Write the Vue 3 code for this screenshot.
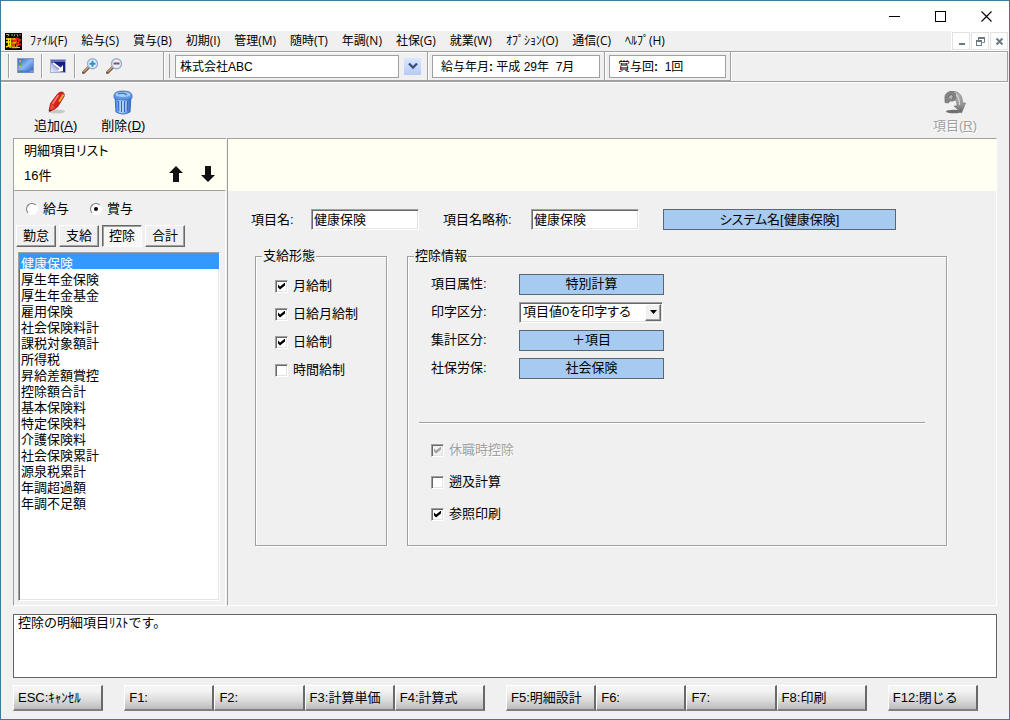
<script setup>
import { ref } from 'vue'

const menus = [
  'ﾌｧｲﾙ(F)', '給与(S)', '賞与(B)', '初期(I)', '管理(M)', '随時(T)',
  '年調(N)', '社保(G)', '就業(W)', 'ｵﾌﾟｼｮﾝ(O)', '通信(C)', 'ﾍﾙﾌﾟ(H)',
]
const tabs = ['勤怠', '支給', '控除', '合計']
const activeTab = ref('控除')
const payType = ref('賞与')
const items = [
  '健康保険', '厚生年金保険', '厚生年金基金', '雇用保険', '社会保険料計',
  '課税対象額計', '所得税', '昇給差額賞控', '控除額合計', '基本保険料',
  '特定保険料', '介護保険料', '社会保険累計', '源泉税累計', '年調超過額', '年調不足額',
]
const selected = ref('健康保険')
const company = ref('株式会社ABC')
const period = ' 平成 29年  7月'
const bonusRound = '  1回'
const itemName = ref('健康保険')
const shortName = ref('健康保険')
const payForms = ref([
  { label: '月給制', on: true },
  { label: '日給月給制', on: true },
  { label: '日給制', on: true },
  { label: '時間給制', on: false },
])
const options = ref([
  { label: '休職時控除', on: true, disabled: true },
  { label: '遡及計算', on: false, disabled: false },
  { label: '参照印刷', on: true, disabled: false },
])
const keyGroups = [
  ['ESC:ｷｬﾝｾﾙ'],
  ['F1:', 'F2:', 'F3:計算単価', 'F4:計算式'],
  ['F5:明細設計', 'F6:', 'F7:', 'F8:印刷'],
  ['F12:閉じる'],
]
</script>

<template>
  <div class="window">
    <header class="titlebar">
      <button aria-label="最小化"><svg width="11" height="11"><path d="M0 5.5H11" stroke="#000" /></svg></button>
      <button aria-label="最大化"><svg width="11" height="11"><rect x=".5" y=".5" width="10" height="10" fill="none" stroke="#000" /></svg></button>
      <button aria-label="閉じる"><svg width="11" height="11"><path d="M.5 .5L10.5 10.5M10.5 .5L.5 10.5" stroke="#000" stroke-width="1.1" /></svg></button>
    </header>

    <nav class="menubar">
      <svg class="logo" width="17" height="17" viewBox="0 0 17 17">
        <rect width="17" height="17" fill="#080400" />
        <path d="M1 1.500H4L3 3.500M6 2H8M10 1L9 3.500M12 1L13 3.500M15 1V2.500" stroke="#ccc" stroke-width=".8" fill="none" />
        <path d="M1 6H6M1 9H6M3.500 5V14M1 14L6 12M6 5L5 15" stroke="#ffe600" stroke-width="1.400" fill="none" />
        <path d="M7 6H11V10H7V14.500H12M9 5V15" stroke="#ffa800" stroke-width="1.300" fill="none" />
        <path d="M7 8L12 7M11 5L15.500 7L12 10M13.500 5V13M11 12L16 11M6.500 11L9 12" stroke="#f02410" stroke-width="1.500" fill="none" />
        <path d="M10 14.500H15M12 12V15" stroke="#ffd000" />
      </svg>
      <button v-for="m in menus" :key="m" class="menu">{{ m }}</button>
      <div class="mdi">
        <button aria-label="子ウィンドウを最小化"><svg width="9" height="9"><path d="M2 7H8" stroke="#6c7a86" stroke-width="2" /></svg></button>
        <button aria-label="元のサイズに戻す"><svg width="9" height="9"><path d="M2.5 3V1H8.5V5.5H6.5" stroke="#6c7a86" fill="none" /><path d="M2 1H9" stroke="#6c7a86" stroke-width="2" /><rect x=".5" y="4" width="5" height="4.5" fill="none" stroke="#6c7a86" /><path d="M0 4H6" stroke="#6c7a86" stroke-width="2" /></svg></button>
        <button aria-label="子ウィンドウを閉じる"><svg width="9" height="9"><path d="M1.5 1.5L7.5 7.5M7.5 1.5L1.5 7.5" stroke="#6c7a86" stroke-width="2" /></svg></button>
      </div>
    </nav>

    <div class="toolbar">
      <div class="band tools">
        <div class="cell">
          <button aria-label="デスクトップ">
            <svg width="17" height="16" viewBox="0 0 17 16">
              <defs><linearGradient id="desk" x1="0" y1="0" x2="1" y2="1"><stop offset="0" stop-color="#2c5cb8" /><stop offset=".5" stop-color="#8ab8f4" /><stop offset="1" stop-color="#2450c0" /></linearGradient></defs>
              <rect x=".5" y=".5" width="16" height="14" fill="url(#desk)" stroke="#8b9cc0" />
              <path d="M2 3H4" stroke="#d8a060" stroke-width="2" /><path d="M2 6H4" stroke="#57a04c" stroke-width="2" /><path d="M2 9H4" stroke="#c8b050" stroke-width="2" />
              <path d="M1 13.5H16" stroke="#3f7fd8" stroke-width="2" /><path d="M1 13.5H5" stroke="#509a54" stroke-width="2" />
              <path d="M13 13.5H16" stroke="#8f9aa8" stroke-width="2" />
            </svg>
          </button>
        </div>
        <div class="cell">
          <button aria-label="画面縮小">
            <svg width="16" height="14" viewBox="0 0 16 14">
              <defs><linearGradient id="shrink" x1="0" y1="1" x2="1" y2="0"><stop offset="0" stop-color="#f4f6ff" /><stop offset=".35" stop-color="#b4bce8" /><stop offset=".5" stop-color="#1a2288" /><stop offset="1" stop-color="#101878" /></linearGradient></defs>
              <rect x=".5" y=".5" width="15" height="13" fill="url(#shrink)" stroke="#a9b0cc" />
              <path d="M1 1H15V3H1Z" fill="#5e6cc0" />
              <path d="M3 4L11 10" stroke="#fff" stroke-width="1.8" /><path d="M13 12V6L7.500 12Z" fill="#fff" />
            </svg>
          </button>
        </div>
        <div class="cell wide">
          <button v-for="kind in ['拡大', '縮小']" :key="kind" :aria-label="kind">
            <svg width="17" height="16" viewBox="0 0 17 16">
              <path d="M7 9L1.500 14.500" stroke="#7a5238" stroke-width="3" stroke-linecap="round" />
              <path d="M6.500 9L1.800 13.700" stroke="#d8a078" stroke-width="1.2" stroke-linecap="round" />
              <circle cx="10.500" cy="5.800" r="5" fill="#e4f2ff" stroke="#9ab0d0" stroke-width="1.4" />
              <path v-if="kind === '拡大'" d="M7.500 5.800H13.500M10.500 2.800V8.800" stroke="#2f8fc4" stroke-width="2" />
              <path v-else d="M7.500 5.500H13.500" stroke="#a04440" stroke-width="2" />
            </svg>
          </button>
        </div>
      </div>
      <div class="band company">
        <input v-model="company" class="field name" aria-label="会社名">
        <button class="drop" aria-label="会社選択"><svg width="10" height="8"><path d="M1 1.500L5 5.500L9 1.500" fill="none" stroke="#3c5078" stroke-width="2.400" /></svg></button>
      </div>
      <div class="band"><div class="field month">給与年月<b>:</b>{{ period }}</div></div>
      <div class="band"><div class="field count">賞与回<b>:</b>{{ bonusRound }}</div></div>
    </div>

    <div class="actions">
      <button class="action">
        <svg width="20" height="25" viewBox="0 0 20 25">
          <ellipse cx="11" cy="21.500" rx="8" ry="2" fill="#b8b8b8" opacity=".7" />
          <path d="M3 21L4.500 13.500L11.500 4Q13.500 1.500 16.500 2Q19 3.500 18 6.500L11.500 17L8 19.500Z" fill="#d6221c" stroke="#a81410" stroke-width=".8" />
          <path d="M12.500 5L6.500 14" stroke="#ff8070" stroke-width="1.600" />
          <path d="M17.500 4.500L13 11.500" stroke="#ecae3c" stroke-width="2" />
          <path d="M5 14Q8 14.500 8.500 18L4 20.800Z" fill="#ee4a3c" /><path d="M2.500 22.500L4.500 19.500L6.300 20.300Z" fill="#6e1410" />
        </svg>
        <span>追加(<u>A</u>)</span>
      </button>
      <button class="action">
        <svg width="20" height="25" viewBox="0 0 20 25">
          <defs><linearGradient id="bin"><stop offset="0" stop-color="#3f80d8" /><stop offset=".4" stop-color="#b4d8ff" /><stop offset="1" stop-color="#2b62c4" /></linearGradient></defs>
          <path d="M2 6L3 22Q10 26 17 22L18 6Z" fill="url(#bin)" stroke="#3a6cc0" />
          <path d="M5.500 11L6 21M8.500 11V22M11.500 11V22M14.500 11L14 21" stroke="#2f66bf" stroke-width="1.200" />
          <path d="M7 11V21.500M10 11V22M13 11V21.500" stroke="#dbeeff" stroke-width=".8" />
          <path d="M1 5Q2 1 10 1Q18 1 19 5V8Q15 10 10 10Q5 10 1 8Z" fill="#5f98e6" stroke="#3a6cc0" stroke-width=".8" />
          <ellipse cx="10" cy="4.500" rx="7.500" ry="2.600" fill="#a6ccf8" />
          <path d="M5 4Q10 2 14 5" fill="none" stroke="#3a70c6" stroke-width="1.200" />
        </svg>
        <span>削除(<u>D</u>)</span>
      </button>
      <button class="action end" disabled>
        <svg width="22" height="25" viewBox="0 0 22 25">
          <defs><linearGradient id="turn" x1="0" y1="0" x2="0" y2="1"><stop offset="0" stop-color="#b8b8b8" /><stop offset=".6" stop-color="#989898" /><stop offset="1" stop-color="#606060" /></linearGradient></defs>
          <ellipse cx="10" cy="21.500" rx="8" ry="1.800" fill="#707070" />
          <path d="M6 1.500H11Q18.500 3 18.500 13H21.500L17.500 23L10 16H13Q13.500 11 10.500 9Z" fill="url(#turn)" stroke="#787878" stroke-width=".7" />
          <path d="M1 12.500V6Q3 1 8 1.500Q13 3 11.500 8.500Q11 11 8.500 11Q5 10 4.500 13Z" fill="#858585" stroke="#6c6c6c" stroke-width=".7" />
          <path d="M4 8Q5 4 8 4.500Q10 6 8.500 9" fill="#b4b4b4" stroke="#5c5c5c" stroke-width=".8" />
          <path d="M12 4.500Q15.500 8 15.500 15" fill="none" stroke="#d4d4d4" stroke-width="1.200" />
        </svg>
        <span>項目(<u>R</u>)</span>
      </button>
    </div>

    <main class="workspace">
      <aside class="side">
        <div class="side-head">
          <h1 class="prop">明細項目リスト</h1>
          <div class="count-row">
            <span>16件</span>
            <button aria-label="上へ移動"><svg width="14" height="16"><path d="M7 0L14 7H10V16H4V7H0Z" fill="#111" /></svg></button>
            <button aria-label="下へ移動"><svg width="14" height="16"><path d="M7 16L14 9H10V0H4V9H0Z" fill="#111" /></svg></button>
          </div>
        </div>
        <div class="side-body">
          <div class="radios">
            <label v-for="r in ['給与', '賞与']" :key="r"><input v-model="payType" type="radio" name="pay" :value="r">{{ r }}</label>
          </div>
          <div class="tabs">
            <button v-for="t in tabs" :key="t" :class="{ on: activeTab === t }" @click="activeTab = t">{{ t }}</button>
          </div>
          <select v-model="selected" class="list" size="16" aria-label="明細項目リスト">
            <option v-for="i in items" :key="i" :value="i">{{ i }}</option>
          </select>
        </div>
      </aside>

      <section class="detail">
        <div class="banner"></div>
        <div class="form">
          <div class="names">
            <label for="itemName">項目名:</label>
            <input id="itemName" v-model="itemName" class="sunken">
            <label for="shortName" class="second">項目名略称:</label>
            <input id="shortName" v-model="shortName" class="sunken">
            <button class="blue prop">システム名[健康保険]</button>
          </div>
          <div class="groups">
            <fieldset class="forms">
              <legend>支給形態</legend>
              <label v-for="p in payForms" :key="p.label" class="check"><input v-model="p.on" type="checkbox">{{ p.label }}</label>
            </fieldset>
            <fieldset class="info">
              <legend>控除情報</legend>
              <div class="row"><span id="attr">項目属性:</span><button class="blue" aria-describedby="attr">特別計算</button></div>
              <div class="row">
                <label for="print">印字区分:</label>
                <div class="combo">
                  <select id="print" class="sunken prop"><option>項目値0を印字する</option></select>
                  <span class="knob"><svg width="7" height="4"><path d="M0 0H7L3.500 4Z" /></svg></span>
                </div>
              </div>
              <div class="row"><span id="total">集計区分:</span><button class="blue" aria-describedby="total">＋項目</button></div>
              <div class="row"><span id="social">社保労保:</span><button class="blue" aria-describedby="social">社会保険</button></div>
              <hr>
              <label v-for="o in options" :key="o.label" class="check tall" :class="{ off: o.disabled }"><input v-model="o.on" type="checkbox" :disabled="o.disabled">{{ o.label }}</label>
            </fieldset>
          </div>
        </div>
      </section>
    </main>

    <p class="message" role="status">控除の明細項目ﾘｽﾄです。</p>

    <footer class="keys">
      <div v-for="(g, n) in keyGroups" :key="n" class="group" :class="{ four: g.length === 4 }">
        <button v-for="k in g" :key="k">{{ k }}</button>
      </div>
    </footer>
  </div>
</template>

<style>
body {
  background: #f0f0f0;
}
</style>

<style scoped>
* {
  box-sizing: border-box;
}
.window {
  display: flex;
  flex-direction: column;
  min-height: 100vh;
  border: 1px solid #3d7a9b;
  background: #f0f0f0;
  color: #000;
  font: 13px/16px "Liberation Sans", "Noto Sans CJK JP", sans-serif;
}
button, input, select {
  margin: 0;
  padding: 0;
  border: 0;
  border-radius: 0;
  background: none;
  color: inherit;
  font: inherit;
}
svg {
  display: block;
}
.prop {
  font-feature-settings: "palt";
}
.titlebar {
  display: flex;
  justify-content: flex-end;
  height: 30px;
  background: #fff;
}
.titlebar button {
  display: grid;
  place-items: center;
  width: 46px;
}
.menubar {
  display: flex;
  align-items: center;
  height: 20px;
  padding-left: 4px;
  font: 12px/18px "Open Sans", "Noto Sans CJK JP", sans-serif;
}
.logo {
  margin-right: 8px;
}
.menu {
  margin-right: 14px;
  padding-bottom: 1px;
  white-space: nowrap;
}
.mdi {
  display: flex;
  gap: 1px;
  margin-left: auto;
  padding: 1px;
  background: #fff;
}
.mdi button {
  display: grid;
  place-items: center;
  width: 18px;
  height: 18px;
  border: 1px solid #e2e2e2;
}
.toolbar {
  display: flex;
  height: 31px;
  margin-right: 1px;
  border: 1px solid #a0a0a0;
  border-left: 0;
  box-shadow: inset 0 1px #fff, 0 1px #fff;
  font-size: 12px;
}
.band {
  display: flex;
  align-items: center;
  padding: 0 4px;
  border-right: 1px solid #a0a0a0;
  border-bottom: 1px solid #a0a0a0;
  box-shadow: 1px 0 #fff;
}
.tools {
  width: 163px;
  padding: 0 0 0 7px;
}
.cell {
  display: flex;
  align-items: center;
  justify-content: center;
  gap: 7px;
  width: 33px;
  height: 24px;
  border-left: 1px solid #a0a0a0;
  box-shadow: inset 1px 0 #fff;
}
.wide {
  width: 56px;
}
.company {
  padding: 0 6px 0 11px;
  background: linear-gradient(#a0a0a0, #a0a0a0) 5px 2px / 1px 24px no-repeat;
}
.field {
  height: 23px;
  padding: 0 8px;
  border: 1px solid #a0a0a0;
  background: #fff;
  line-height: 22px;
  white-space: pre;
}
.name {
  width: 224px;
  padding: 0 4px 1px;
}
.month {
  width: 168px;
}
.count {
  width: 117px;
}
.drop {
  display: grid;
  place-items: center;
  width: 17px;
  height: 17px;
  margin-left: 5px;
  background: linear-gradient(#dce7ff, #b4cbf8);
}
.actions {
  display: flex;
  gap: 24px;
  height: 56px;
  padding: 8px 32px 0 33px;
}
.action {
  display: flex;
  flex-direction: column;
  align-items: center;
  gap: 3px;
  height: 44px;
}
.end {
  margin-left: auto;
  color: #a0a0a0;
  text-shadow: 1px 1px #fff;
}
.workspace {
  display: flex;
  flex: 1;
  gap: 1px;
  padding: 0 12px;
}
.side {
  display: flex;
  flex-direction: column;
  width: 213px;
}
.side-head {
  height: 52px;
  padding: 4px 11px 0 10px;
  border-top: 1px solid #a0a0a0;
  border-left: 1px solid #a0a0a0;
  background: #fffff2;
}
h1 {
  margin: 0;
  font: inherit;
}
.count-row {
  display: flex;
  align-items: center;
  gap: 18px;
  margin-top: 4px;
}
.count-row span {
  flex: 1;
  padding-top: 5px;
}
.side-body {
  display: flex;
  flex: 1;
  flex-direction: column;
  padding: 10px 5px 4px 2px;
  border: 1px solid #fff;
  border-top-color: #a0a0a0;
  border-left-color: #a0a0a0;
}
.radios {
  display: flex;
  gap: 21px;
  padding-left: 10px;
}
.radios label {
  display: flex;
  align-items: center;
  gap: 5px;
}
.radios input {
  appearance: none;
  display: grid;
  place-items: center;
  width: 12px;
  height: 12px;
  border: 1px solid #fff;
  border-top-color: #777;
  border-left-color: #777;
  border-radius: 6px;
  background: #fff;
}
.radios input:checked::after {
  content: "";
  width: 4px;
  height: 4px;
  border-radius: 2px;
  background: #000;
}
.tabs {
  display: flex;
  gap: 3px;
  margin-top: 8px;
}
.tabs button {
  width: 40px;
  height: 22px;
  border: 1px solid #fff;
  border-right-color: #696969;
  border-bottom-color: #696969;
  box-shadow: inset -1px -1px #a0a0a0;
}
.tabs .on {
  border-color: #696969 #fff #fff #696969;
  background: #f8f8f8;
  box-shadow: inset 1px 1px #a0a0a0;
}
.list {
  flex: 1;
  margin: 5px 0 0 2px;
  overflow: hidden;
  border: 1px solid #fff;
  border-top-color: #a0a0a0;
  border-left-color: #a0a0a0;
  outline: 0;
  background: #fff;
  box-shadow: inset 1px 1px #696969, inset -1px -1px #e3e3e3;
}
.list option {
  min-height: 16px;
  height: 16px;
  padding: 0 2px;
  line-height: 14px;
}
.list option:checked {
  background: #3399ff linear-gradient(#3399ff, #3399ff);
  color: #fff;
}
.detail {
  display: flex;
  flex: 1;
  flex-direction: column;
  border: 1px solid #fff;
  border-top-color: #a0a0a0;
  border-left-color: #a0a0a0;
}
.banner {
  height: 52px;
  background: #fffff2;
}
.form {
  display: flex;
  flex: 1;
  flex-direction: column;
  padding: 18px 49px 59px 23px;
}
.names {
  display: flex;
  align-items: center;
  margin-right: 51px;
}
.names label {
  width: 60px;
}
.names .second {
  width: 88px;
  margin-left: 24px;
}
.names .blue {
  flex: 1;
  margin-left: 24px;
}
.sunken {
  width: 108px;
  height: 21px;
  padding: 0 2px 3px;
  border: 1px solid #fff;
  border-top-color: #a0a0a0;
  border-left-color: #a0a0a0;
  background: #fff;
  box-shadow: inset 1px 1px #696969, inset -1px -1px #e3e3e3;
}
.blue {
  width: 145px;
  height: 21px;
  border: 1px solid #5c666e;
  background: #a6caf0;
}
.groups {
  display: flex;
  flex: 1;
  gap: 20px;
  margin: 19px 0 0 4px;
}
fieldset {
  display: flex;
  flex-direction: column;
  min-width: 0;
  margin: 0;
  border: 1px solid #a0a0a0;
  box-shadow: 1px 1px #fff, inset 1px 1px #fff;
}
legend {
  margin-left: 6px;
  padding: 0 1px;
  background: #f0f0f0;
  line-height: 14px;
}
.forms {
  width: 132px;
  padding: 9px 0 0 0;
}
.forms .check {
  padding-left: 19px;
}
.info {
  flex: 1;
  padding: 7px 0 0 0;
}
.check {
  display: flex;
  align-items: center;
  gap: 5px;
  height: 28px;
}
.check input {
  appearance: none;
  width: 13px;
  height: 13px;
  border: 1px solid #fff;
  border-top-color: #a0a0a0;
  border-left-color: #a0a0a0;
  background: #fff;
  box-shadow: inset 1px 1px #696969, inset -1px -1px #e3e3e3;
}
.check input:checked::after {
  content: "";
  display: block;
  width: 7px;
  height: 7px;
  margin: 2px;
  background: #000;
  clip-path: polygon(0 29%, 29% 57%, 100% 0, 100% 43%, 29% 100%, 0 71%);
}
.tall {
  height: 32px;
  padding-left: 23px;
}
.off {
  color: #a0a0a0;
  text-shadow: 1px 1px #fff;
}
.check.off input {
  background: #f0f0f0;
}
.check.off input:checked::after {
  background: #a0a0a0;
}
.row {
  display: grid;
  grid-template-columns: 88px auto;
  align-items: center;
  justify-content: start;
  height: 28px;
  padding-left: 23px;
}
.combo {
  display: grid;
  align-items: center;
}
.combo > * {
  grid-area: 1 / 1;
}
.combo select {
  appearance: none;
  width: 144px;
  padding: 0 3px 2px;
  line-height: 17px;
}
.knob {
  display: grid;
  place-items: center;
  justify-self: end;
  width: 16px;
  height: 17px;
  margin-right: 2px;
  border: 1px solid #fff;
  border-right-color: #696969;
  border-bottom-color: #696969;
  background: #f0f0f0;
  box-shadow: inset -1px -1px #a0a0a0;
  pointer-events: none;
}
hr {
  height: 2px;
  margin: 40px 21px 10px 11px;
  border: 0;
  border-top: 1px solid #a0a0a0;
  background: #fff;
}
.message {
  height: 64px;
  margin: 8px 12px 7px;
  padding: 0 4px;
  border: 1px solid #646464;
  background: #fff;
}
.keys {
  display: flex;
  gap: 21px;
  padding: 0 31px 8px 12px;
}
.group {
  display: flex;
  flex: 1;
}
.four {
  flex: 4;
}
.keys button {
  flex: 1 1 0;
  height: 26px;
  padding: 1px 4px 0;
  border: 1px solid #fff;
  border-right: 2px solid #696969;
  border-bottom: 2px solid #808080;
  background: linear-gradient(#f4f4f4 20%, #dcdcdc 60%, #bcbcbc);
  text-align: left;
  white-space: nowrap;
}
</style>
